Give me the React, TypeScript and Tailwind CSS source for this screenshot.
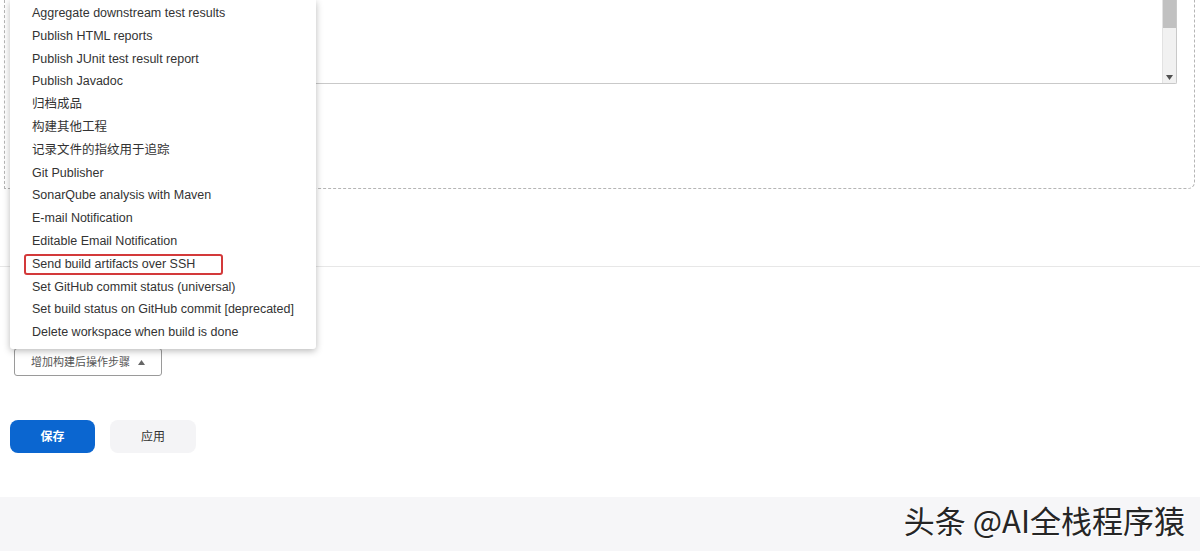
import React from "react";

const items = [
  "Aggregate downstream test results",
  "Publish HTML reports",
  "Publish JUnit test result report",
  "Publish Javadoc",
  "归档成品",
  "构建其他工程",
  "记录文件的指纹用于追踪",
  "Git Publisher",
  "SonarQube analysis with Maven",
  "E-mail Notification",
  "Editable Email Notification",
  "Send build artifacts over SSH",
  "Set GitHub commit status (universal)",
  "Set build status on GitHub commit [deprecated]",
  "Delete workspace when build is done",
];

// post-build step dropdown, opened above its button
function StepMenu() {
  return (
    <div className="absolute left-[10px] top-0 w-[306px] bg-white pt-[2px] pb-[5px] shadow-[0_2px_7px_rgba(0,0,0,0.28)] rounded-b-[3px]">
      {items.map((label) => {
        const marked = label === "Send build artifacts over SSH";
        return (
          <div key={label} className="h-[22.8px] flex items-center pl-[22px] text-[#333]">
            {marked ? (
              <span className="-ml-[8px] pl-[6px] w-[199px] h-[21px] flex items-center border-2 border-[#d3393a] rounded-[3px]">
                {label}
              </span>
            ) : (
              <span>{label}</span>
            )}
          </div>
        );
      })}
    </div>
  );
}

export default function App() {
  return (
    <div className="relative w-[1200px] h-[551px] overflow-hidden bg-white text-[12.5px] font-['Liberation_Sans','Noto_Sans_CJK_SC',sans-serif]">
      <div className="flex flex-col h-full">
        {/* build step box (top scrolled off) */}
        <div className="ml-[4px] mr-[5px] h-[189px] border border-t-0 border-dashed border-[#b5b5b5] rounded-br-[7px] pr-[17px] pl-[14px]">
          <div className="h-[84px] flex border border-t-0 border-[#c9c9c9] rounded-br-[2px]">
            <div className="flex-1" />
            <div className="w-[14px] flex flex-col bg-[#f1f1f1] border-l border-[#e2e2e2]">
              <div className="h-[28px] bg-[#c1c1c1]" />
              <div className="flex-1" />
              <div className="h-[12px] flex items-center justify-center">
                <svg width="7" height="5" viewBox="0 0 7 5">
                  <path d="M0 0h7L3.5 5z" fill="#505050" />
                </svg>
              </div>
            </div>
          </div>
        </div>

        <div className="mt-[77px] border-t border-[#e7e7e7]" />

        <div className="mt-[81px] pl-[14px]">
          <button className="h-[28px] w-[148px] flex items-center pl-[16px] gap-[8px] border border-[#9a9a9a] rounded-[3px] text-[11px] text-[#555] bg-white">
            <span>增加构建后操作步骤</span>
            <svg width="7" height="5" viewBox="0 0 7 5">
              <path d="M0 5h7L3.5 0z" fill="#666" />
            </svg>
          </button>
        </div>

        <div className="mt-[44px] pl-[10px] flex gap-[15px]">
          <button className="w-[85px] h-[33px] rounded-[8px] bg-[#0b66d0] text-white font-bold text-[12px]">
            保存
          </button>
          <button className="w-[86px] h-[33px] rounded-[8px] bg-[#f4f4f6] text-[#333] text-[12px]">
            应用
          </button>
        </div>

        <div className="mt-[44px] flex-1 bg-[#f6f6f8] flex justify-end pr-[15px] pt-[4px]">
          <span className="text-[31px] leading-[38px] font-normal text-[#262626] font-['Noto_Sans_CJK_SC',sans-serif] [text-shadow:1px_1px_0_#fff]">
            头条 @AI全栈程序猿
          </span>
        </div>
      </div>

      <StepMenu />
    </div>
  );
}
